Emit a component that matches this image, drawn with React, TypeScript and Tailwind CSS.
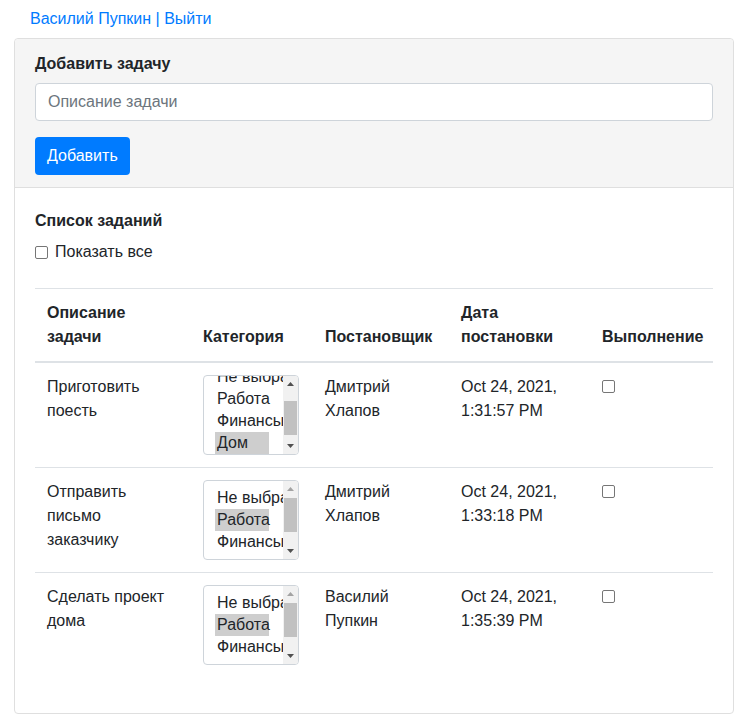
import React from "react";

interface Task {
  text: string;
  selected: number;
  scrolled: boolean;
  author: string;
  date: string;
}

const tasks: Task[] = [
  { text: "Приготовить поесть", selected: 3, scrolled: true, author: "Дмитрий Хлапов", date: "Oct 24, 2021, 1:31:57 PM" },
  { text: "Отправить письмо заказчику", selected: 1, scrolled: false, author: "Дмитрий Хлапов", date: "Oct 24, 2021, 1:33:18 PM" },
  { text: "Сделать проект дома", selected: 1, scrolled: false, author: "Василий Пупкин", date: "Oct 24, 2021, 1:35:39 PM" },
];

const categories = ["Не выбрано", "Работа", "Финансы", "Дом"];

function Box() {
  return <span className="inline-block w-[13px] h-[13px] border border-[#767676] rounded-[2px] bg-white shrink-0" />;
}

function Arrow({ up, dim }: { up?: boolean; dim?: boolean }) {
  return (
    <div className="h-[16px] flex items-center justify-center">
      <svg width="7" height="4" viewBox="0 0 7 4">
        <path d={up ? "M0 4 L3.5 0 L7 4 Z" : "M0 0 L3.5 4 L7 0 Z"} fill={dim ? "#a3a3a3" : "#505050"} />
      </svg>
    </div>
  );
}

function CategoryList({ selected, scrolled }: { selected: number; scrolled: boolean }) {
  return (
    <div className="w-[96px] h-[80px] border border-[#ced4da] rounded flex overflow-hidden bg-white">
      <div className="flex-1 overflow-hidden pl-[11px]">
        <div className={scrolled ? "-mt-[10px]" : "mt-[6px] h-[66px] overflow-hidden"}>
          {categories.map((c, i) => (
            <div
              key={c}
              className={
                "w-[54px] h-[22px] leading-[22px] px-[2px] whitespace-nowrap " +
                (i === selected ? "bg-[#cecece]" : "")
              }
            >
              {c}
            </div>
          ))}
        </div>
      </div>
      <div className="w-[15px] bg-[#f1f1f1] flex flex-col">
        <Arrow up dim={!scrolled} />
        <div className={"flex-1 flex flex-col px-px " + (scrolled ? "justify-end pb-[3px]" : "pt-px")}>
          <div className="h-[34px] bg-[#c1c1c1]" />
        </div>
        <Arrow />
      </div>
    </div>
  );
}

export default function App() {
  return (
    <div className="min-h-screen bg-white text-[#212529] text-base leading-6 px-[14px] pt-[7px] pb-4" style={{ fontFamily: '"Liberation Sans", Arial, sans-serif' }}>
      <div className="pl-4 mb-[7px] text-[#007bff]">Василий Пупкин | Выйти</div>

      <div className="w-[720px] border border-[#dfdfdf] rounded">
        <div className="bg-[#f5f5f5] px-5 py-3 border-b border-[#dfdfdf] rounded-t">
          <div className="font-bold pt-px -mb-px">Добавить задачу</div>
          <div className="h-2" />
          <input
            className="w-full h-[38px] border border-[#ced4da] rounded bg-white px-3 outline-none placeholder:text-[#6c757d]"
            placeholder="Описание задачи"
          />
          <button className="mt-4 h-[38px] px-3 bg-[#007bff] text-white rounded">Добавить</button>
        </div>

        <div className="p-5">
          <div className="font-bold pt-px -mb-px">Список заданий</div>
          <div className="h-2" />
          <label className="flex items-center gap-[7px]">
            <Box />
            <span>Показать все</span>
          </label>

          <table className="mt-6 mb-4 w-full table-fixed border-collapse">
            <colgroup>
              <col className="w-[156px]" />
              <col className="w-[122px]" />
              <col className="w-[136px]" />
              <col className="w-[141px]" />
              <col />
            </colgroup>
            <thead>
              <tr className="border-t border-[#dee2e6]">
                <th className="p-3 text-left align-bottom font-bold border-b-2 border-[#dee2e6]">Описание задачи</th>
                <th className="p-3 text-left align-bottom font-bold border-b-2 border-[#dee2e6]">Категория</th>
                <th className="p-3 text-left align-bottom font-bold border-b-2 border-[#dee2e6] whitespace-nowrap">Постановщик</th>
                <th className="p-3 text-left align-bottom font-bold border-b-2 border-[#dee2e6]">Дата постановки</th>
                <th className="p-3 text-left align-bottom font-bold border-b-2 border-[#dee2e6] whitespace-nowrap">Выполнение</th>
              </tr>
            </thead>
            <tbody>
              {tasks.map((t, i) => (
                <tr key={t.text} className={i > 0 ? "border-t border-[#dee2e6]" : ""}>
                  <td className="pl-3 pr-6 py-3 align-top">{t.text}</td>
                  <td className="p-3 align-top">
                    <CategoryList selected={t.selected} scrolled={t.scrolled} />
                  </td>
                  <td className="p-3 align-top">{t.author}</td>
                  <td className="p-3 align-top">{t.date}</td>
                  <td className="p-3 align-top">
                    <div className="pt-[5px] flex">
                      <Box />
                    </div>
                  </td>
                </tr>
              ))}
            </tbody>
          </table>
        </div>
      </div>
    </div>
  );
}
